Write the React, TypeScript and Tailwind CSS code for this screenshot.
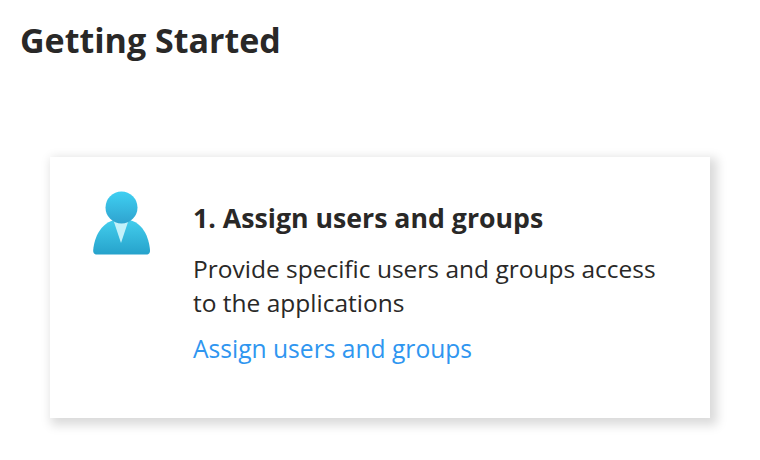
export default function App() {
  return (
    <div className="w-[760px] h-[460px] bg-white overflow-hidden font-['Open_Sans','Noto_Sans',sans-serif] text-[#292827]">
      <h1 className="pt-[17px] pl-5 text-[34px] leading-[46px] font-bold">Getting Started</h1>
      <div className="ml-[50px] mt-[94px] w-[660px] h-[261px] bg-white shadow-[4px_4px_10px_3px_rgba(0,0,0,0.15)] flex pl-[42px] pt-[34px]">
        <svg width="60" height="66" viewBox="0 0 60 66" className="shrink-0">
          <defs>
            <linearGradient id="a" x1="0" y1="0" x2="0" y2="1"><stop offset="0" stopColor="#3fd0f2" /><stop offset="1" stopColor="#2fa3cf" /></linearGradient>
            <linearGradient id="b" x1="0" y1="0" x2="0" y2="1"><stop offset="0" stopColor="#44cfee" /><stop offset="1" stopColor="#26a2cb" /></linearGradient>
          </defs>
          <path d="M5 63.500c-3 0-4-2-3.800-4.500 1-11 7-31 28.800-31s27 20 28 31c.2 2.500-.8 4.500-3.800 4.500z" fill="url(#b)" />
          <path d="M21 28h16l-8 24z" fill="#c3f1fa" />
          <circle cx="29.500" cy="16.500" r="16" fill="url(#a)" />
        </svg>
        <div className="ml-[41px]">
          <h2 className="text-[26.700px] leading-[34px] font-bold mt-[10px]">1. Assign users and groups</h2>
          <p className="text-[24.500px] leading-[34px] mt-[17px] w-[480px]">Provide specific users and groups access to the applications</p>
          <a className="text-[24.600px] leading-[34px] text-[#2f96f0] block mt-[12px]">Assign users and groups</a>
        </div>
      </div>
    </div>
  );
}
